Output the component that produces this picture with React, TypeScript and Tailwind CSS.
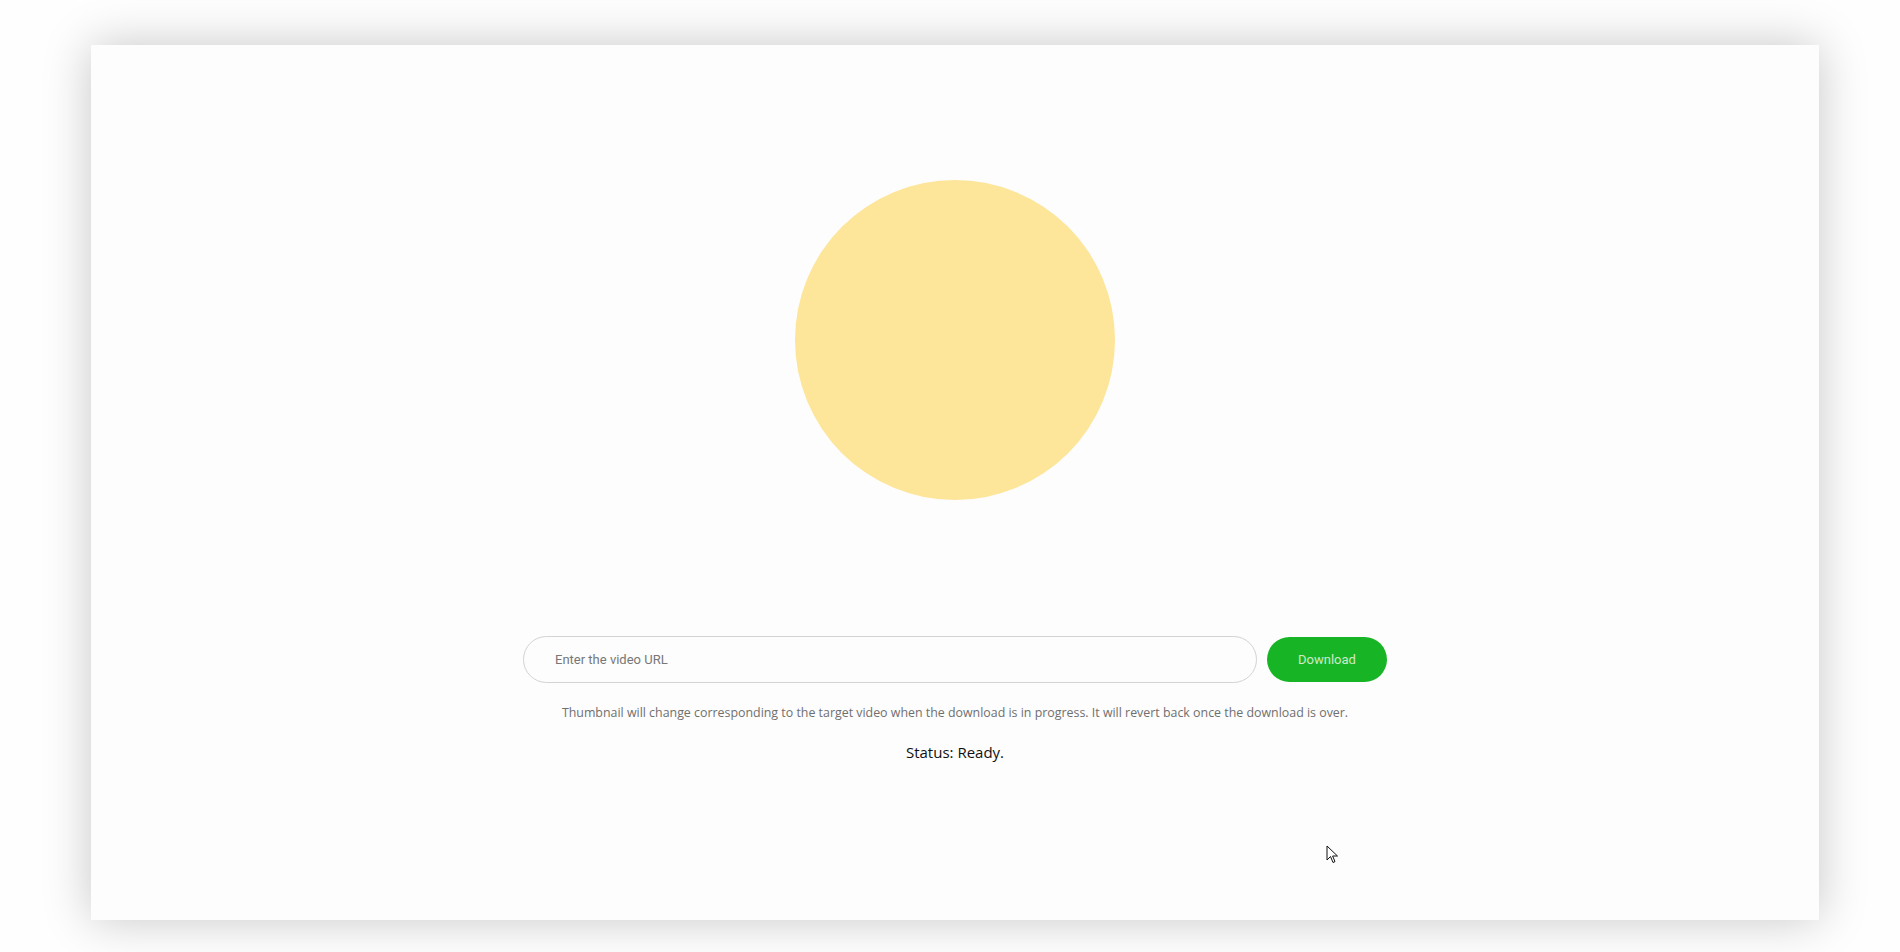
import { useState } from 'react';

export default function App() {
  const [url, setUrl] = useState('');

  return (
    <div className="w-[1900px] h-[952px] bg-[#fefefe] pt-[45px] pl-[91px] overflow-hidden">
      <div className="relative w-[1728px] h-[875px] bg-[#fdfdfd] shadow-[0_0_45px_rgba(0,0,0,0.22)] flex flex-col items-center">
        <div className="mt-[135px] w-[320px] h-[320px] rounded-full bg-[#fde59a]" />

        <div className="mt-[136px] flex items-center gap-[10px]">
          <input
            value={url}
            onChange={(e) => setUrl(e.target.value)}
            placeholder="Enter the video URL"
            className="w-[734px] h-[47px] rounded-full border border-[#d3d3d3] bg-[#fdfdfd] pl-[31px] pr-4 text-[13px] text-[#333] placeholder:text-[#777] outline-none font-['Roboto',sans-serif]"
          />
          <button className="w-[120px] h-[45px] rounded-full bg-[#17b526] text-[13px] text-[#cfe9c6] font-['Roboto',sans-serif]">
            Download
          </button>
        </div>

        <p className="mt-[21px] text-[12.4px] text-[#6f6f6f] font-['Open_Sans',sans-serif]">
          Thumbnail will change corresponding to the target video when the download is in progress. It will revert back once the download is over.
        </p>
        <p className="mt-[18px] text-[15px] text-[#111] font-['Open_Sans',sans-serif]">Status: Ready.</p>

        {/* mouse pointer captured in the screenshot */}
        <svg className="absolute left-[1235px] top-[800px]" width="13" height="19" viewBox="0 0 13 19">
          <path d="M1 1 L1 15 L4.5 11.5 L7 17.5 L9 16.6 L6.6 11 L11.5 11 Z" fill="#fff" stroke="#111" strokeWidth="1" strokeLinejoin="round" />
        </svg>
      </div>
    </div>
  );
}
